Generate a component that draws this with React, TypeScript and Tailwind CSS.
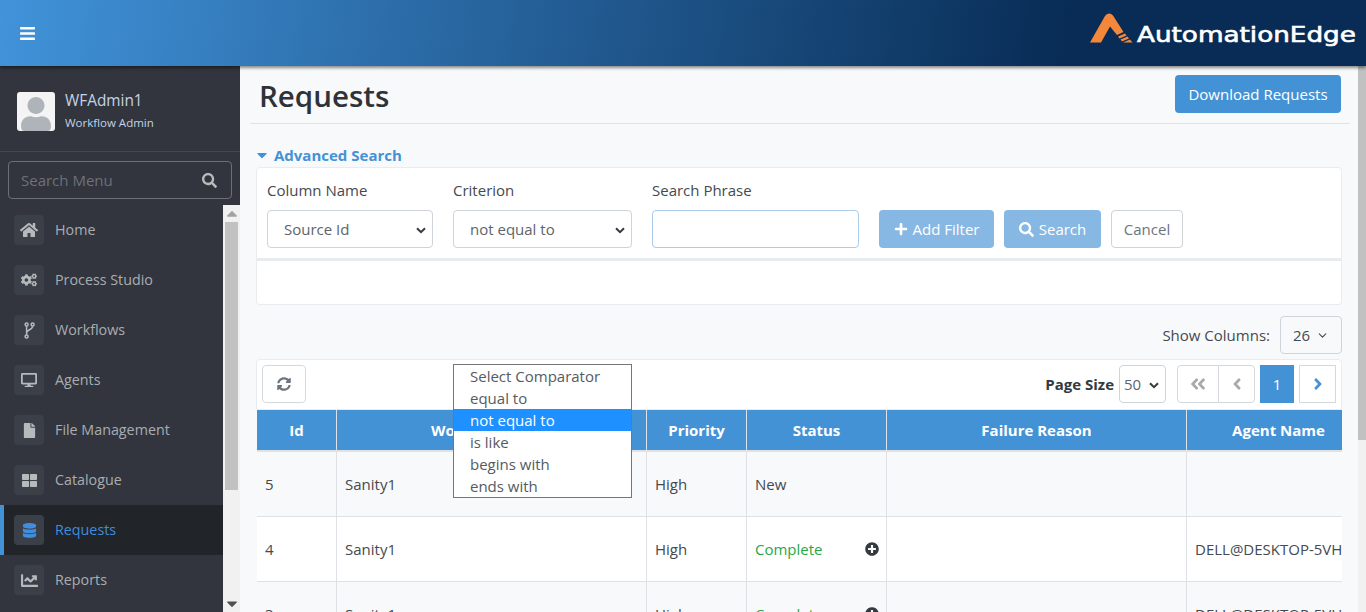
import React from "react";
import {
  FaBars, FaHome, FaCogs, FaDesktop, FaFile, FaThLarge, FaDatabase, FaChartLine,
  FaSearch, FaPlus, FaSyncAlt, FaPlusCircle, FaAngleDoubleLeft, FaAngleLeft, FaAngleRight, FaCaretDown, FaCaretUp, FaUser,
} from "react-icons/fa";
import { FiChevronDown } from "react-icons/fi";

function Fork({ size, className }: { size?: number; className?: string }) {
  return (
    <svg width="11" height="17" viewBox="0 0 11 17" className={className}>
      <g fill="none" stroke="currentColor" strokeWidth="1.5">
        <circle cx="2.6" cy="2.6" r="1.5" />
        <circle cx="2.6" cy="14.4" r="1.5" />
        <circle cx="8.6" cy="2.6" r="1.5" />
        <path d="M2.6 4.2 V12.8 M8.6 4.2 C8.6 8 2.6 7.5 2.6 11" />
      </g>
    </svg>
  );
}

const menu = [
  { label: "Home", Icon: FaHome, size: 18 },
  { label: "Process Studio", Icon: FaCogs, size: 16 },
  { label: "Workflows", Icon: Fork, size: 13 },
  { label: "Agents", Icon: FaDesktop, size: 16 },
  { label: "File Management", Icon: FaFile, size: 15 },
  { label: "Catalogue", Icon: FaThLarge, size: 15 },
  { label: "Requests", Icon: FaDatabase, size: 15, active: true },
  { label: "Reports", Icon: FaChartLine, size: 17 },
];

function Sel({ value, className }: { value: string; className: string }) {
  return (
    <div className={"relative flex h-[38px] items-center rounded border border-[#ced4da] bg-white pl-4 pt-px text-[15px] text-[#5d646b] " + className}>
      {value}
      <svg className="absolute right-[6px] top-[16px]" width="10" height="7" viewBox="0 0 10 7">
        <path d="M1 1.2 L5 5.2 L9 1.2" fill="none" stroke="#343a40" strokeWidth="2" />
      </svg>
    </div>
  );
}

function Row({ bg, id, status, agent, plus, first }: { bg: string; id: string; status: string; agent: string; plus: boolean; first?: boolean }) {
  const pad = first ? " pt-px" : "";
  const cell = "flex items-center border-r border-[#dee2e6] px-2 text-[15px]" + pad;
  const tone = "text-[#444a50]";
  return (
    <div className={"flex h-[65px] shrink-0 border-b border-[#dee2e6] " + bg}>
      <div className={cell + " w-[80px] " + tone}>{id}</div>
      <div className={cell + " w-[310px] " + tone}>Sanity1</div>
      <div className={cell + " w-[100px] " + tone}>High</div>
      <div className={cell + " relative w-[140px] " + (status === "Complete" ? "text-[#28a745]" : tone)}>
        {status}
        {plus && <FaPlusCircle className="absolute right-[7px] top-[25px] text-[#343a40]" size={14} />}
      </div>
      <div className={cell + " w-[300px]"}></div>
      <div className="flex w-[155px] items-center overflow-hidden whitespace-nowrap pl-2 text-[15px] text-[#444a50]">{agent}</div>
    </div>
  );
}

export default function App() {
  return (
    <div className="flex h-[612px] w-[1366px] flex-col overflow-hidden bg-[#f8f9fb] font-['Open_Sans','Noto_Sans',sans-serif] text-[#444a50]">
      <header className="relative z-10 flex h-[66px] shrink-0 items-center justify-between bg-[linear-gradient(100deg,#4193da_0%,#082c55_78%)] shadow-[0_2px_3px_rgba(0,0,0,0.45)]">
        <FaBars className="ml-[19px] text-white" size={17} />
        <div className="mr-[10px] flex items-start self-start pt-[13px]">
          <svg width="43" height="30" viewBox="0 0 43 30">
            <path d="M0 29.5 L15 3 Q19 -1.5 23 2.5 L33.5 19 L27 22 L20 13.5 L11 29.5 Z" fill="#f5873a" />
            <path d="M28 23.5 L35 20.5 L36.5 22.5 L29.5 25.5 Z M30.5 26.5 L37.5 23.5 L39 25.5 L32 28.5 Z M33 29.5 L40 26.5 L42.5 29.5 Z" fill="#f5873a" />
          </svg>
          <span className="ml-[4px] mt-[10px] w-[219px] origin-left scale-x-[1.28] whitespace-nowrap font-['DejaVu_Sans',sans-serif] text-[20.5px] font-normal leading-[24px] text-white [-webkit-text-stroke:0.6px_white]">AutomationEdge</span>
        </div>
      </header>

      <div className="flex min-h-0 flex-1">
        <aside className="flex w-[240px] shrink-0 flex-col bg-[#32353e]">
          <div className="flex h-[86px] shrink-0 items-start border-b border-[#454851] pl-[17px]">
            <div className="mt-[26px] flex h-[39px] w-[38px] items-end justify-center overflow-hidden rounded-[3px] bg-[#f4f4f4]">
              <FaUser className="text-[#aeb4ba]" size={34} />
            </div>
            <div className="ml-[10px] pt-[25px] text-[#c4d3e4]">
              <div className="text-[15.4px] leading-[20px]">WFAdmin1</div>
              <div className="mt-[4px] text-[11.5px] leading-[16px]">Workflow Admin</div>
            </div>
          </div>
          <div className="px-[8px] pt-[9px]">
            <div className="flex h-[38px] items-center justify-between rounded border border-[#6c7076] pl-[12px] pr-[14px]">
              <span className="text-[15px] text-[#6d7178]">Search Menu</span>
              <FaSearch className="text-[#b8bbbc]" size={15} />
            </div>
          </div>
          <div className="mt-[6px] flex min-h-0 flex-1">
            <nav className="w-[223px]">
              {menu.map(({ label, Icon, size, active }) => (
                <div key={label} className={"flex h-[50px] items-center " + (active ? "border-l-4 border-[#4392d6] bg-[#212429] pl-[10px]" : "pl-[14px]")}>
                  <div className="flex h-[30px] w-[30px] items-center justify-center rounded bg-[#3b3f48]">
                    <Icon size={size} className={active ? "text-[#3f8ddc]" : "text-[#b6babd]"} />
                  </div>
                  <span className={"ml-[11px] text-[14.3px] " + (active ? "text-[#3f8ddc]" : "text-[#a9adb1]")}>{label}</span>
                </div>
              ))}
            </nav>
            <div className="flex w-[17px] flex-col items-center bg-[#f1f1f1]">
              <FaCaretUp className="h-[17px] text-[#a3a3a3]" size={12} />
              <div className="h-[268px] w-[13px] bg-[#c1c1c1]"></div>
              <div className="flex-1"></div>
              <FaCaretDown className="h-[17px] text-[#505050]" size={12} />
            </div>
          </div>
        </aside>

        <main className="flex min-w-0 flex-1 overflow-hidden">
          <div className="min-w-0 flex-1 pl-[10px] pr-[8px]">
            <div className="flex h-[58px] items-start justify-between border-b border-[#dfe2e6] pl-[9px] pr-[9px] pt-[9px]">
              <h1 className="mt-[2px] text-[29.5px] font-semibold leading-[38px] text-[#2f3338]">Requests</h1>
              <button className="h-[38px] w-[166px] rounded bg-[#4392d6] text-[15px] text-white">Download Requests</button>
            </div>

            <div className="ml-[6px] mr-[8px]">
              <div className="mt-[21px] flex h-[20px] items-center text-[15px] font-bold text-[#4392d6]">
                <FaCaretDown size={16} className="-ml-[2px] mr-[4px]" />
                Advanced Search
              </div>
              <div className="mt-[2px] flex h-[92px] items-start rounded-t border border-[#e9ecef] bg-white pl-[10px] pt-[12px]">
                <div className="w-[166px]">
                  <div className="h-[21px] text-[15px] leading-[21px]">Column Name</div>
                  <Sel value="Source Id" className="mt-[9px] w-[166px]" />
                </div>
                <div className="ml-[20px] w-[179px]">
                  <div className="h-[21px] text-[15px] leading-[21px]">Criterion</div>
                  <Sel value="not equal to" className="mt-[9px] w-[179px]" />
                </div>
                <div className="ml-[20px] w-[207px]">
                  <div className="h-[21px] text-[15px] leading-[21px]">Search Phrase</div>
                  <div className="mt-[9px] h-[38px] rounded border border-[#a9cceb] bg-white"></div>
                </div>
                <div className="ml-[20px] mt-[30px] flex gap-[10px]">
                  <button className="flex h-[38px] w-[115px] items-center justify-center gap-[5px] rounded bg-[#87b8e4] text-[15px] text-white">
                    <FaPlus size={14} /> Add Filter
                  </button>
                  <button className="flex h-[38px] w-[97px] items-center justify-center gap-[5px] rounded bg-[#87b8e4] text-[15px] text-white">
                    <FaSearch size={15} /> Search
                  </button>
                  <button className="h-[38px] w-[72px] rounded border border-[#ced4da] bg-white text-[15px] text-[#6c757d]">Cancel</button>
                </div>
              </div>
              <div className="h-[46px] rounded-b border border-t-2 border-[#e9ecef] bg-white"></div>

              <div className="mt-[11px] flex h-[38px] items-center justify-end">
                <span className="text-[15px] text-[#444a50]">Show Columns:</span>
                <div className="ml-[10px] flex h-[38px] w-[62px] items-center justify-center gap-[6px] rounded border border-[#ced4da] text-[15px]">
                  26 <FiChevronDown size={13} />
                </div>
              </div>

              <div className="relative mt-[5px]">
                <div className="flex h-[51px] items-start justify-between rounded-t border border-[#e9ecef] bg-white pl-[5px] pr-[5px] pt-[5px]">
                  <button className="flex h-[38px] w-[44px] items-center justify-center rounded border border-[#d5d9dd] bg-white text-[#6c757d]">
                    <FaSyncAlt size={14} />
                  </button>
                  <div className="flex items-center">
                    <span className="text-[15px] font-bold text-[#343a40]">Page Size</span>
                    <Sel value="50" className="ml-[5px] w-[47px] !pl-[4px]" />
                    <div className="ml-[11px] flex h-[38px] w-[78px] rounded border border-[#d5d9dd] text-[#a5abb0]">
                      <div className="flex w-[41px] items-center justify-center border-r border-[#d5d9dd]"><FaAngleDoubleLeft size={18} /></div>
                      <div className="flex flex-1 items-center justify-center"><FaAngleLeft size={18} /></div>
                    </div>
                    <div className="ml-[5px] flex h-[38px] w-[34px] items-center justify-center bg-[#4392d6] text-[15px] text-white">1</div>
                    <div className="ml-[5px] flex h-[38px] w-[37px] items-center justify-center border border-[#d5d9dd] text-[#4392d6]"><FaAngleRight size={18} /></div>
                  </div>
                </div>

                <div className="ml-[1px] overflow-hidden">
                  <div className="flex h-[42px] w-[1085px] border-b-2 border-[#dee2e6] bg-[#4392d6] text-[15px] font-bold text-white">
                    <div className="flex w-[80px] items-center justify-center border-r border-[#dee2e6]">Id</div>
                    <div className="flex w-[310px] items-center justify-center border-r border-[#dee2e6]">Workflow Name</div>
                    <div className="flex w-[100px] items-center justify-center border-r border-[#dee2e6]">Priority</div>
                    <div className="flex w-[140px] items-center justify-center border-r border-[#dee2e6]">Status</div>
                    <div className="flex w-[300px] items-center justify-center border-r border-[#dee2e6]">Failure Reason</div>
                    <div className="flex w-[155px] items-center justify-center pl-[28px]">Agent Name</div>
                  </div>
                  <Row bg="bg-[#f8f9fb]" id="5" status="New" agent="" plus={false} first />
                  <Row bg="bg-white" id="4" status="Complete" agent="DELL@DESKTOP-5VH" plus />
                  <Row bg="bg-[#f8f9fb]" id="3" status="Complete" agent="DELL@DESKTOP-5VH" plus />
                </div>

                <div className="absolute left-[197px] top-[5px] h-[134px] w-[179px] border border-[#767676] bg-white text-[15px] leading-[22px] text-[#555b61]">
                  <div className="h-[22px] pl-4">Select Comparator</div>
                  <div className="h-[22px] pl-4">equal to</div>
                  <div className="h-[22px] bg-[#1e90ff] pl-4 text-white">not equal to</div>
                  <div className="h-[22px] pl-4">is like</div>
                  <div className="h-[22px] pl-4">begins with</div>
                  <div className="h-[22px] pl-4">ends with</div>
                </div>
              </div>
            </div>
          </div>
          <div className="w-[8px] shrink-0 bg-[#f1f1f1]">
            <div className="h-[374px] w-[8px] bg-[#c1c1c1]"></div>
          </div>
        </main>
      </div>
    </div>
  );
}
